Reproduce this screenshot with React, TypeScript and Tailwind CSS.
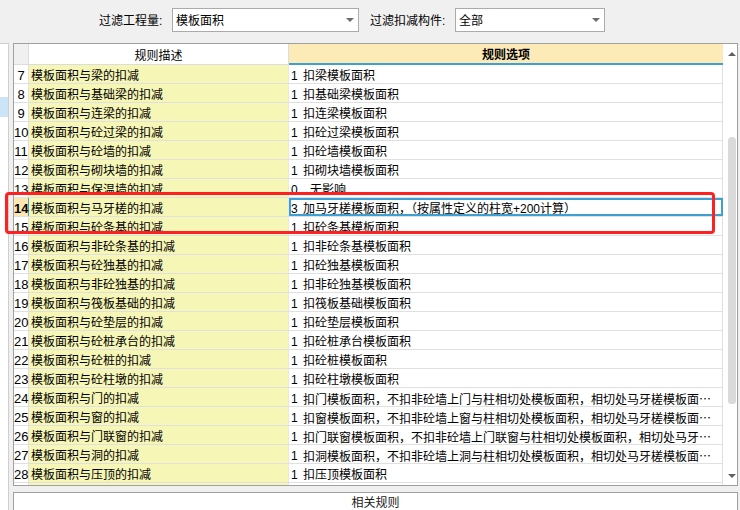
import React from "react";

type Row = { n: number; desc: string; num: string; opt: string; ell?: boolean; pad?: boolean; sel?: boolean };

const rows: Row[] = [
  { n: 7, desc: "模板面积与梁的扣减", num: "1", opt: "扣梁模板面积" },
  { n: 8, desc: "模板面积与基础梁的扣减", num: "1", opt: "扣基础梁模板面积" },
  { n: 9, desc: "模板面积与连梁的扣减", num: "1", opt: "扣连梁模板面积" },
  { n: 10, desc: "模板面积与砼过梁的扣减", num: "1", opt: "扣砼过梁模板面积" },
  { n: 11, desc: "模板面积与砼墙的扣减", num: "1", opt: "扣砼墙模板面积" },
  { n: 12, desc: "模板面积与砌块墙的扣减", num: "1", opt: "扣砌块墙模板面积" },
  { n: 13, desc: "模板面积与保温墙的扣减", num: "0", opt: "无影响", pad: true },
  { n: 14, desc: "模板面积与马牙槎的扣减", num: "3", opt: "加马牙槎模板面积，（按属性定义的柱宽+200计算）", sel: true },
  { n: 15, desc: "模板面积与砼条基的扣减", num: "1", opt: "扣砼条基模板面积" },
  { n: 16, desc: "模板面积与非砼条基的扣减", num: "1", opt: "扣非砼条基模板面积" },
  { n: 17, desc: "模板面积与砼独基的扣减", num: "1", opt: "扣砼独基模板面积" },
  { n: 18, desc: "模板面积与非砼独基的扣减", num: "1", opt: "扣非砼独基模板面积" },
  { n: 19, desc: "模板面积与筏板基础的扣减", num: "1", opt: "扣筏板基础模板面积" },
  { n: 20, desc: "模板面积与砼垫层的扣减", num: "1", opt: "扣砼垫层模板面积" },
  { n: 21, desc: "模板面积与砼桩承台的扣减", num: "1", opt: "扣砼桩承台模板面积" },
  { n: 22, desc: "模板面积与砼桩的扣减", num: "1", opt: "扣砼桩模板面积" },
  { n: 23, desc: "模板面积与砼柱墩的扣减", num: "1", opt: "扣砼柱墩模板面积" },
  { n: 24, desc: "模板面积与门的扣减", num: "1", opt: "扣门模板面积，不扣非砼墙上门与柱相切处模板面积，相切处马牙槎模板面", ell: true },
  { n: 25, desc: "模板面积与窗的扣减", num: "1", opt: "扣窗模板面积，不扣非砼墙上窗与柱相切处模板面积，相切处马牙槎模板面", ell: true },
  { n: 26, desc: "模板面积与门联窗的扣减", num: "1", opt: "扣门联窗模板面积，不扣非砼墙上门联窗与柱相切处模板面积，相切处马牙", ell: true },
  { n: 27, desc: "模板面积与洞的扣减", num: "1", opt: "扣洞模板面积，不扣非砼墙上洞与柱相切处模板面积，相切处马牙槎模板面", ell: true },
  { n: 28, desc: "模板面积与压顶的扣减", num: "1", opt: "扣压顶模板面积" },
  { n: 29, desc: "", num: "", opt: "" },
];

function Arrow() {
  return <div className="w-0 h-0 border-x-[4px] border-x-transparent border-t-[4px] border-t-[#6d6d6d]" />;
}

export default function App() {
  return (
    <div className="relative w-[740px] h-[510px] bg-[#f0f0f0] flex flex-col overflow-hidden text-[12px] text-black font-['Liberation_Sans','Noto_Sans_CJK_SC',sans-serif]">
      {/* toolbar */}
      <div className="h-[43px] shrink-0 flex items-start pt-[8px]">
        <div className="ml-[99px] w-[73px] h-[24px] flex items-center pt-[1px]">过滤工程量:</div>
        <div className="w-[187px] h-[24px] bg-white border border-[#ababab] flex items-center pl-[3px]">
          <span className="pt-[1px]">模板面积</span>
          <div className="ml-auto mr-[4px]"><Arrow /></div>
        </div>
        <div className="ml-[11px] w-[85px] h-[24px] flex items-center pt-[1px]">过滤扣减构件:</div>
        <div className="w-[150px] h-[24px] bg-white border border-[#ababab] flex items-center pl-[3px]">
          <span className="pt-[1px]">全部</span>
          <div className="ml-auto mr-[4px]"><Arrow /></div>
        </div>
      </div>

      {/* main */}
      <div className="flex flex-1 min-h-0">
        <div className="w-[9px] bg-white border-t border-r border-[#cfcfcf] pt-[53px]">
          <div className="h-[20px] bg-[#cce4f7]" />
        </div>
        <div className="w-[4px]" />
        <div className="w-[725px] flex flex-col">
          {/* table */}
          <div className="h-[443px] shrink-0 border border-[#a0a0a0] bg-white flex overflow-hidden">
            <div className="w-[709px] flex flex-col overflow-hidden">
              {/* header */}
              <div className="flex h-[21px] shrink-0">
                <div className="w-[15px] bg-[#f0f0f0] border-r border-b border-[#dcdcdc]" />
                <div className="w-[260px] bg-white border-r border-b border-[#dcdcdc] flex items-center justify-center pt-[3px]">规则描述</div>
                <div className="w-[434px] bg-[#fdebb7] border-b-2 border-b-[#3ca0d5] flex items-center justify-center font-bold pt-[3px]">规则选项</div>
              </div>
              {rows.map((r) => (
                <div key={r.n} className="flex h-[19px] shrink-0 border-b border-[#e0e0e0] leading-[18px]">
                  <div
                    className={
                      r.sel
                        ? "w-[15px] bg-[#fde6b2] border-r border-r-[#3ca0d5] text-center text-[13px] font-bold pt-[2px]"
                        : "w-[15px] border-r border-[#e0e0e0] text-center text-[13px] pt-[2px]"
                    }
                  >
                    {r.n <= 28 ? r.n : ""}
                  </div>
                  <div className="w-[260px] bg-[#f6f6b7] border-r border-[#e8e8e8] pl-[2px] pt-[2px] whitespace-nowrap overflow-hidden">{r.desc}</div>
                  <div
                    className={
                      r.sel
                        ? "w-[434px] pl-[2px] pt-[2px] flex whitespace-nowrap overflow-hidden shadow-[inset_0_0_0_2px_#3ca0d5]"
                        : "w-[434px] pl-[2px] pt-[2px] flex whitespace-nowrap overflow-hidden border-r border-[#e0e0e0]"
                    }
                  >
                    <span className="w-[12px] shrink-0">{r.num}</span>
                    <span className={r.pad ? "pl-[7px]" : ""}>
                      {r.opt}
                      {r.ell ? <span className="font-['Noto_Sans_CJK_SC',sans-serif]">…</span> : null}
                    </span>
                  </div>
                </div>
              ))}
            </div>
            {/* scrollbar */}
            <div className="w-[14px] bg-white flex flex-col items-center pl-[3px] pt-[8px]">
              <div className="w-0 h-0 border-x-[4px] border-x-transparent border-b-[4px] border-b-[#606060]" />
              <div className="mt-[81px] w-[8px] h-[267px] bg-[#dadada] rounded-t-[4px] rounded-b-[3px]" />
              <div className="mt-[70px]">
                <div className="w-0 h-0 border-x-[4px] border-x-transparent border-t-[4px] border-t-[#606060]" />
              </div>
            </div>
          </div>
          <div className="h-[6px] shrink-0" />
          <div className="flex-1 bg-white border-t border-x border-[#a0a0a0] flex justify-center pt-[1px] text-[#1a1a1a]">相关规则</div>
        </div>
      </div>

      {/* red highlight */}
      <div className="absolute left-[5px] top-[192px] w-[710px] h-[42px] border-[3px] border-[#ff2121] rounded-[4px]" />
    </div>
  );
}
